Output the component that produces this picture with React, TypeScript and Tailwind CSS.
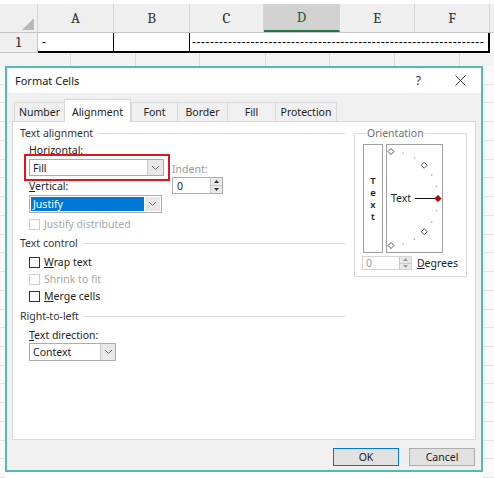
import React from 'react';

const ui = "font-['Noto_Sans',sans-serif]";
const serif = 'font-serif';

function Chevron() {
  return (
    <svg width="9" height="6" viewBox="0 0 9 6">
      <polyline points="1,1 4.5,4.5 8,1" fill="none" stroke="#666" strokeWidth="1" />
    </svg>
  );
}

function SpinArrows({ dim }: { dim?: boolean }) {
  const c = dim ? '#9a9a9a' : '#333';
  return (
    <div className="w-[12px] h-full flex flex-col border-l border-[#c8c8c8] bg-[#e9e9e9]">
      <div className="flex-1 flex items-center justify-center border-b border-[#c8c8c8]">
        <svg width="5" height="3" viewBox="0 0 5 3"><polygon points="0,3 2.5,0 5,3" fill={c} /></svg>
      </div>
      <div className="flex-1 flex items-center justify-center">
        <svg width="5" height="3" viewBox="0 0 5 3"><polygon points="0,0 2.5,3 5,0" fill={c} /></svg>
      </div>
    </div>
  );
}

function Check({ label, disabled }: { label: React.ReactNode; disabled?: boolean }) {
  return (
    <div className="flex items-center h-[12px] pl-[9px]">
      <div
        className={
          disabled
            ? 'w-[11px] h-[11px] border border-[#cfcfcf] bg-white'
            : 'w-[11px] h-[11px] border border-[#333] bg-white'
        }
      />
      <span className={disabled ? 'ml-[4px] text-[#a8a8a8]' : 'ml-[4px] text-[#222]'}>{label}</span>
    </div>
  );
}

function GroupHead({ title }: { title: string }) {
  return (
    <div className="flex items-center h-[12px]">
      <span className="text-[#333]">{title}</span>
      <div className="flex-1 h-px bg-[#dcdcdc] ml-[5px]" />
    </div>
  );
}

function Dial() {
  const cx = 4;
  const cy = 53.5;
  const r = 47;
  const pt = (a: number) => {
    const t = (a * Math.PI) / 180;
    return { x: cx + r * Math.cos(t), y: cy - r * Math.sin(t) };
  };
  const dots = [15, 30, 60, 75, -15, -30, -60, -75].map(pt);
  const marks = [90, 45, -45, -90].map(pt);
  return (
    <svg width="55" height="107" viewBox="0 0 55 107">
      {dots.map((d, i) => (
        <rect key={i} x={d.x - 0.7} y={d.y - 0.7} width="1.4" height="1.4" fill="#aaa" />
      ))}
      {marks.map((m, i) => (
        <polygon
          key={i}
          points={`${m.x},${m.y - 3} ${m.x + 3},${m.y} ${m.x},${m.y + 3} ${m.x - 3},${m.y}`}
          fill="#fff"
          stroke="#555"
          strokeWidth="1"
        />
      ))}
      <text x="4" y="57" fontSize="10.5" fill="#222" fontFamily="Noto Sans, sans-serif">
        Text
      </text>
      <line x1="28" y1="53.5" x2="49" y2="53.5" stroke="#111" strokeWidth="1" />
      <polygon points="51,50.3 54.2,53.5 51,56.7 47.8,53.5" fill="#c00000" stroke="#7a0000" strokeWidth="0.6" />
    </svg>
  );
}

function Sheet() {
  const cols = [
    { l: 'A', w: 'w-[76px]' },
    { l: 'B', w: 'w-[76px]' },
    { l: 'C', w: 'w-[74px]' },
    { l: 'D', w: 'w-[76px]' },
    { l: 'E', w: 'w-[75px]' },
    { l: 'F', w: 'w-[75px]' },
  ];
  return (
    <div>
      <div className="h-[4px]" />
      <div className="flex h-[29px] bg-[#efefef] border-b border-[#c6c6c6]">
        <div className="w-[38px] border-r border-[#d4d4d4] flex items-end justify-end pr-[3px] pb-[2px]">
          <svg width="12" height="12" viewBox="0 0 12 12"><polygon points="12,0 12,12 0,12" fill="#b9b9b9" /></svg>
        </div>
        {cols.map((c) =>
          c.l === 'D' ? (
            <div
              key={c.l}
              className={`${c.w} bg-[#d2d2d2] border-r border-[#d4d4d4] border-b-2 border-b-[#217346] flex items-center justify-center text-[15px] text-[#2b5a3c] ${serif}`}
            >
              {c.l}
            </div>
          ) : (
            <div
              key={c.l}
              className={`${c.w} border-r border-[#d4d4d4] flex items-center justify-center text-[15px] text-[#333] ${serif}`}
            >
              {c.l}
            </div>
          )
        )}
        <div className="flex-1" />
      </div>
      <div className="flex h-[20px]">
        <div className={`w-[38px] bg-[#efefef] border-r border-b border-[#c6c6c6] flex items-center justify-center text-[15px] text-[#333] ${serif}`}>
          1
        </div>
        <div className="flex border-b-2 border-black">
          <div className="w-[76px] border-r border-black flex items-center pl-[4px] text-[12px] text-black font-['Liberation_Sans',sans-serif]">
            -
          </div>
          <div className="w-[76px] border-r border-black" />
          <div className="w-[300px] border-r-2 border-black flex items-center pl-[2px] overflow-hidden whitespace-nowrap text-[12px] tracking-[0.5px] text-black font-['Liberation_Sans',sans-serif]">
            {'-'.repeat(65)}
          </div>
        </div>
      </div>
      <div className="flex h-[13px] bg-[#f3f3f3]">
        <div className="w-[71px] border-r border-[#dadada]" />
        <div className="w-[65px] border-r border-[#dadada]" />
        <div className="w-[64px] border-r border-[#dadada]" />
        <div className="w-[66px] border-r border-[#dadada]" />
        <div className="w-[64px] border-r border-[#dadada]" />
        <div className="w-[65px] border-r border-[#dadada]" />
        <div className="w-[65px] border-r border-[#dadada]" />
        <div className="flex-1" />
      </div>
    </div>
  );
}

function Strip({ w }: { w: string }) {
  return (
    <div className={`${w} flex flex-col bg-[#f9f9f9]`}>
      {Array.from({ length: 22 }).map((_, i) => (
        <div key={i} className="h-[19px] border-b border-[#e4e4e4]" />
      ))}
    </div>
  );
}

function Dialog() {
  const tabs = [
    { t: 'Number', w: 'w-[50px]' },
    { t: 'Alignment', w: 'w-[67px]', active: true },
    { t: 'Font', w: 'w-[46px]' },
    { t: 'Border', w: 'w-[50px]' },
    { t: 'Fill', w: 'w-[48px]' },
    { t: 'Protection', w: 'w-[62px]' },
  ];
  return (
    <div className={`w-[478px] h-[406px] border-2 border-[#55bab4] bg-[#f0f0f0] flex flex-col text-[10.5px] leading-[12px] text-[#222] ${ui}`}>
      <div className="h-[25px] bg-white flex items-center pl-[8px]">
        <span className="text-[11px] text-[#222]">Format Cells</span>
        <div className="flex-1" />
        <span className="text-[12px] text-[#333] mr-[34px]">?</span>
        <svg width="11" height="11" viewBox="0 0 11 11" className="mr-[15px]">
          <line x1="0.5" y1="0.5" x2="10.5" y2="10.5" stroke="#333" strokeWidth="1" />
          <line x1="10.5" y1="0.5" x2="0.5" y2="10.5" stroke="#333" strokeWidth="1" />
        </svg>
      </div>
      <div className="flex-1 px-[5px] pt-[6px] pb-[4px] flex flex-col">
        <div className="flex items-end h-[23px] -mb-px ml-[2px] relative z-10">
          {tabs.map((tb) =>
            tb.active ? (
              <div
                key={tb.t}
                className={`${tb.w} h-[23px] bg-white border border-b-0 border-[#d9d9d9] flex items-center justify-center pt-[1px]`}
              >
                {tb.t}
              </div>
            ) : (
              <div
                key={tb.t}
                className={`${tb.w} h-[19px] mb-px border border-b-0 border-r-0 last:border-r border-[#d9d9d9] flex items-center justify-center`}
              >
                {tb.t}
              </div>
            )
          )}
        </div>
        <div className="h-[319px] bg-white border border-[#d9d9d9] flex pl-[7px] pr-[8px] pt-[5px]">
          <div className="flex-1 flex flex-col">
            <GroupHead title="Text alignment" />
            <div className="pl-[9px] mt-[5px] h-[12px]">
              <span className="underline decoration-[#555]">H</span>orizontal:
            </div>
            <div className="flex pl-[9px] mt-[3px]">
              <div className="flex flex-col">
                <div className="relative w-[135px] h-[17px] border border-[#acacac] flex bg-white">
                  <div className="flex-1 flex items-center pl-[3px]">Fill</div>
                  <div className="w-[16px] border-l border-[#c8c8c8] bg-[#e8e8e8] flex items-center justify-center">
                    <Chevron />
                  </div>
                  <div className="absolute -left-[6px] -right-[7px] -top-[6px] -bottom-[6px] border-2 border-[#e0161b]" />
                </div>
                <div className="mt-[4px] h-[12px]">
                  <span className="underline">V</span>ertical:
                </div>
                <div className="mt-[3px] w-[133px] h-[18px] border border-[#acacac] flex bg-white p-px">
                  <div className="flex-1 flex items-center pl-[2px] bg-[#0078d7] text-white">Justify</div>
                  <div className="w-[15px] ml-px bg-[#e8e8e8] flex items-center justify-center">
                    <Chevron />
                  </div>
                </div>
              </div>
              <div className="ml-[8px] flex flex-col">
                <div className="mt-[4px] h-[12px] text-[#9a9a9a]">Indent:</div>
                <div className="mt-[2px] w-[51px] h-[17px] border border-[#acacac] flex bg-white">
                  <div className="flex-1 flex items-center pl-[4px]">0</div>
                  <SpinArrows />
                </div>
              </div>
            </div>
            <div className="mt-[5px]">
              <Check label="Justify distributed" disabled />
            </div>
            <div className="mt-[7px]">
              <GroupHead title="Text control" />
            </div>
            <div className="mt-[7px]">
              <Check label={<><span className="underline">W</span>rap text</>} />
            </div>
            <div className="mt-[5px]">
              <Check label="Shrink to fit" disabled />
            </div>
            <div className="mt-[5px]">
              <Check label={<><span className="underline">M</span>erge cells</>} />
            </div>
            <div className="mt-[8px]">
              <GroupHead title="Right-to-left" />
            </div>
            <div className="pl-[9px] mt-[7px] h-[12px]">
              <span className="underline">T</span>ext direction:
            </div>
            <div className="ml-[9px] mt-[2px] w-[87px] h-[18px] border border-[#acacac] flex bg-white">
              <div className="flex-1 flex items-center pl-[3px]">Context</div>
              <div className="w-[15px] border-l border-[#c8c8c8] bg-[#e8e8e8] flex items-center justify-center">
                <Chevron />
              </div>
            </div>
          </div>
          <fieldset className="w-[108px] h-[150px] ml-[9px] border border-[#dcdcdc] px-[8px] pt-[5px] pb-[6px]">
            <legend className="ml-[3px] px-px h-[12px] text-[#707070]">Orientation</legend>
            <div className="flex">
              <div className="w-[20px] h-[109px] border border-[#a0a0a0] flex flex-col items-center justify-center font-semibold text-[9.5px] leading-[12px] text-[#222]">
                <div className="h-[12px]">T</div>
                <div className="h-[12px]">e</div>
                <div className="h-[12px]">x</div>
                <div className="h-[12px]">t</div>
              </div>
              <div className="w-[57px] h-[109px] ml-[3px] border border-[#a0a0a0]">
                <Dial />
              </div>
            </div>
            <div className="flex items-center mt-[3px] -ml-px">
              <div className="w-[50px] h-[14px] border border-[#d4d4d4] flex bg-white">
                <div className="flex-1 flex items-center pl-[3px] text-[#a0a0a0]">0</div>
                <SpinArrows dim />
              </div>
              <span className="ml-[5px]">
                <span className="underline">D</span>egrees
              </span>
            </div>
          </fieldset>
        </div>
        <div className="flex justify-end gap-[10px] mt-[8px] pr-[1px]">
          <button className="w-[66px] h-[18px] bg-[#e1e1e1] border border-[#0078d7] flex items-center justify-center text-[#222]">
            OK
          </button>
          <button className="w-[66px] h-[18px] bg-[#e1e1e1] border border-[#adadad] flex items-center justify-center text-[#222]">
            Cancel
          </button>
        </div>
      </div>
    </div>
  );
}

export default function App() {
  return (
    <div className="w-[494px] h-[478px] bg-white overflow-hidden">
      <Sheet />
      <div className="flex h-[412px]">
        <Strip w="w-[5px]" />
        <div className="flex flex-col">
          <Dialog />
          <div className="flex-1 bg-white" />
        </div>
        <Strip w="flex-1" />
      </div>
    </div>
  );
}
